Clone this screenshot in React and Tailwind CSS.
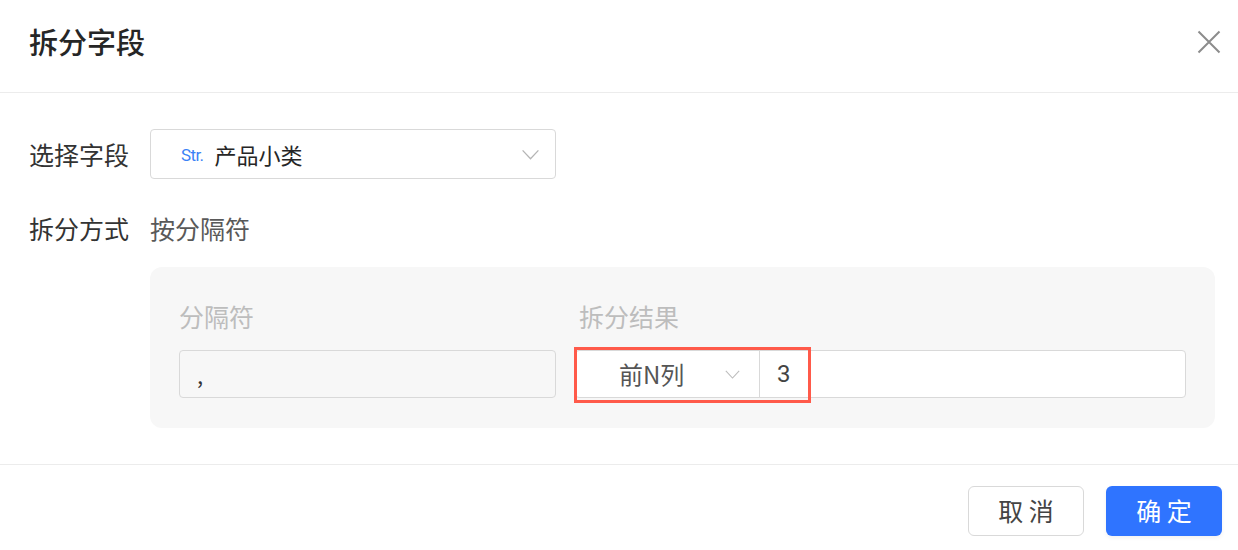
const FONT = { fontFamily: '"Noto Sans CJK SC", "Noto Sans", sans-serif' };

function Chevron({ className }) {
  return (
    <svg viewBox="0 0 20 14" className={className} fill="none" stroke="currentColor" strokeWidth="1.4">
      <path d="M1.5 2.5 L10 11.5 L18.5 2.5" />
    </svg>
  );
}

function CloseIcon() {
  return (
    <svg viewBox="0 0 24 24" className="w-[24px] h-[24px] text-[#8c8c8c]" fill="none" stroke="currentColor" strokeWidth="2">
      <path d="M1.5 1.5 L22.5 22.5 M22.5 1.5 L1.5 22.5" />
    </svg>
  );
}

export default function App() {
  return (
    <div className="w-[1238px] h-[550px] bg-white flex flex-col overflow-hidden" style={FONT}>
      {/* Header */}
      <div className="h-[93px] flex items-start justify-between pl-[29px] pr-[17px] pt-[23px] border-b border-[#ececec] flex-shrink-0">
        <h1 className="text-[29px] leading-[36px] font-medium text-[#262626]">拆分字段</h1>
        <div className="mt-[7px]">
          <CloseIcon />
        </div>
      </div>

      {/* Body */}
      <div className="flex-1 pl-[29px] pr-[23px] pt-[36px]">
        <div className="flex items-center">
          <div className="w-[121px] text-[25px] leading-[34px] text-[#333]">选择字段</div>
          <div className="w-[406px] h-[50px] border border-[#d9d9d9] rounded-[4px] flex items-center pl-[30px] pr-[15px]">
            <span className="text-[17px] leading-none text-[#3b82f6] tracking-[-0.6px] mr-[11px] mt-[2px]" style={{ fontFamily: 'Roboto, sans-serif' }}>Str.</span>
            <span className="text-[22px] text-[#262626] flex-1">产品小类</span>
            <Chevron className="w-[19px] h-[13px] text-[#b5b5b5]" />
          </div>
        </div>

        <div className="flex items-center mt-[32px]">
          <div className="w-[121px] text-[25px] leading-[34px] text-[#333]">拆分方式</div>
          <div className="text-[25px] leading-[34px] text-[#595959]">按分隔符</div>
        </div>

        <div className="ml-[121px] mt-[22px] bg-[#f7f7f7] rounded-[12px] pl-[29px] pr-[29px] pt-[32px] pb-[30px] flex gap-[19px]">
          <div className="w-[377px] flex flex-col">
            <div className="text-[25px] leading-[34px] text-[#bdbdbd]">分隔符</div>
            <div className="mt-[17px] h-[48px] border border-[#d9d9d9] rounded-[4px] flex items-center pl-[17px] text-[22px] text-[#333]">
              ,
            </div>
          </div>
          <div className="flex-1 flex flex-col">
            <div className="pl-[4px] text-[25px] leading-[34px] text-[#bdbdbd]">拆分结果</div>
            <div className="relative mt-[17px] h-[48px] border border-[#d9d9d9] rounded-[4px] flex items-stretch bg-white">
              <div className="w-[184px] flex items-center pl-[43px] pr-[18px] border-r border-[#d9d9d9]">
                <span className="flex-1 text-[24px] text-[#555]">前N列</span>
                <Chevron className="w-[17px] h-[11px] text-[#bdbdbd]" />
              </div>
              <div className="flex-1 flex items-center pl-[17px] text-[24px] text-[#444]" style={{ fontFamily: 'Roboto, sans-serif' }}>
                3
              </div>
              <div className="absolute left-[-2px] top-[-4px] w-[237px] h-[56px] border-[3px] border-[#ff5a4a] pointer-events-none" />
            </div>
          </div>
        </div>
      </div>

      {/* Footer */}
      <div className="h-[86px] border-t border-[#ececec] flex justify-end items-start pt-[21px] pr-[16px] gap-[22px] flex-shrink-0">
        <button className="w-[116px] h-[50px] border border-[#d9d9d9] rounded-[6px] bg-white text-[25px] text-[#444]">取 消</button>
        <button className="w-[116px] h-[50px] rounded-[6px] bg-[#2f74ff] text-[25px] text-white shadow-[0_2px_4px_rgba(0,0,0,0.06)]">确 定</button>
      </div>
    </div>
  );
}
